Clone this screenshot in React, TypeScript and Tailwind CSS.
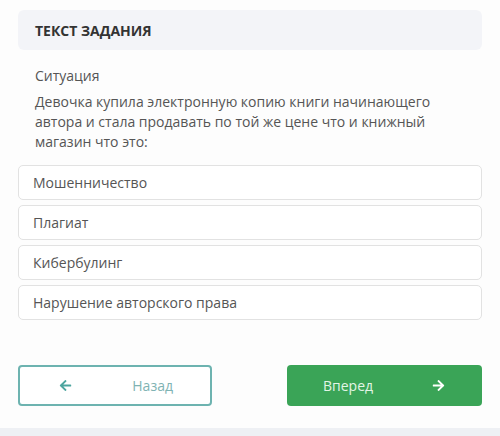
import { FaArrowLeft, FaArrowRight } from "react-icons/fa";

const options = [
  "Мошенничество",
  "Плагиат",
  "Кибербулинг",
  "Нарушение авторского права",
];

export default function App() {
  return (
    <div
      className="flex h-[436px] w-[500px] flex-col bg-[#fdfdfd] text-[#555]"
      style={{ fontFamily: '"Open Sans", "Noto Sans", sans-serif' }}
    >
      <div className="flex-1 px-[18px] pt-[10px]">
        <div className="flex h-[40px] items-center rounded-md bg-[#f3f4f8] px-[17px]">
          <h2 className="text-[14px] font-bold text-[#333]">ТЕКСТ ЗАДАНИЯ</h2>
        </div>

        <div className="px-[17px] pt-[16px]">
          <p className="text-[14px] leading-[20px]">Ситуация</p>
          <p className="mt-[6px] text-[14px] leading-[20px]">
            Девочка купила электронную копию книги начинающего автора и стала
            продавать по той же цене что и книжный магазин что это:
          </p>
        </div>

        <div className="mt-[13px] flex flex-col gap-[5px]">
          {options.map((o) => (
            <div
              key={o}
              className="flex h-[35px] items-center rounded-[5px] border border-[#e2e2e2] bg-white px-[14px] text-[14px]"
            >
              {o}
            </div>
          ))}
        </div>

        <div className="mt-[45px] flex justify-between">
          <button className="flex h-[41px] w-[194px] items-center justify-between rounded-[4px] border-2 border-[#6db3b0] bg-white pl-[39px] pr-[37px] text-[14px] text-[#7fb3b3]">
            <FaArrowLeft className="text-[13px] text-[#4da59f]" />
            <span>Назад</span>
          </button>
          <button className="flex h-[41px] w-[195px] items-center justify-between rounded-[4px] bg-[#3aa457] pl-[36px] pr-[37px] text-[14px] text-[#e3f5e6]">
            <span>Вперед</span>
            <FaArrowRight className="text-[13px] text-white" />
          </button>
        </div>
      </div>
      <div className="h-[8px] bg-[#eef0f4]" />
    </div>
  );
}
